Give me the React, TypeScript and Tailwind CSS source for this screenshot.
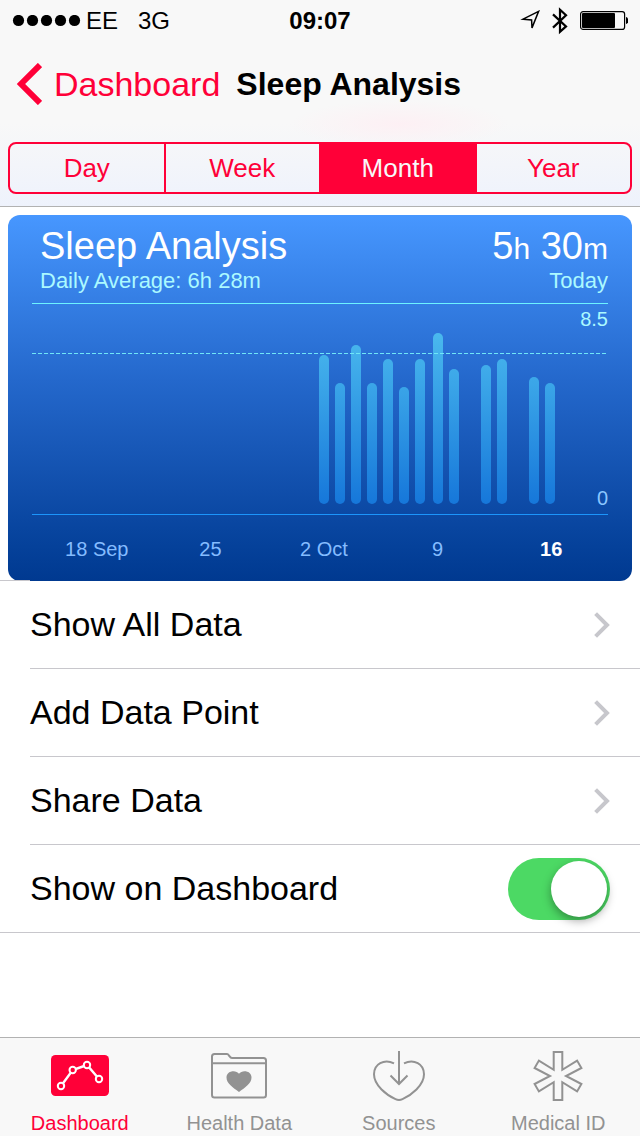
import { useState } from 'react'
import type { ReactNode } from 'react'

const ranges = ['Day', 'Week', 'Month', 'Year']

const weeks = ['18 Sep', '25', '2 Oct', '9', '16']

// x centre and top of every night's bar, in chart units
const nights = [
  { x: 292, top: 52 },
  { x: 308, top: 80 },
  { x: 324, top: 42 },
  { x: 340, top: 80 },
  { x: 356, top: 56 },
  { x: 372, top: 84 },
  { x: 388, top: 56 },
  { x: 406, top: 30 },
  { x: 422, top: 66 },
  { x: 454, top: 62 },
  { x: 470, top: 56 },
  { x: 502, top: 74 },
  { x: 518, top: 80 },
]

function StatusBar() {
  return (
    <div className="grid h-[42px] grid-cols-3 items-center px-3 text-2xl leading-10">
      <div className="flex items-center">
        <svg width="70" height="12" viewBox="0 0 70 12" aria-hidden="true">
          {[6.5, 20.5, 34.5, 48.5, 62.5].map((cx) => (
            <circle key={cx} cx={cx} cy="5.5" r="5.6" />
          ))}
        </svg>
        <span className="ml-1">EE</span>
        <span className="ml-5">3G</span>
      </div>
      <div className="text-center font-bold">09:07</div>
      <div className="flex items-center justify-end">
        <svg width="20" height="22" viewBox="0 0 20 22" fill="none" stroke="#000" strokeWidth="1.5" aria-hidden="true">
          <path d="M18.6 1.400 3 9.200l8.600.7.4 8z" />
        </svg>
        <svg className="ml-3" width="16" height="28" viewBox="0 0 16 28" fill="none" stroke="#000" strokeWidth="2.2" aria-hidden="true">
          <path d="m1 7.400 13 12-6 5.400V2.800l6 5.400-13 12.400" />
        </svg>
        <svg className="ml-3" width="48" height="20" viewBox="0 0 48 20" aria-hidden="true">
          <rect x="0.6" y="0.6" width="44" height="17.800" rx="2.5" fill="none" stroke="#000" strokeWidth="1.2" />
          <rect x="2" y="2" width="33" height="15" rx="1" />
          <path d="M46 6c1.500.4 2.500 1.800 2.500 3.500S47.500 12.600 46 13z" />
        </svg>
      </div>
    </div>
  )
}

function SleepChart() {
  return (
    <svg viewBox="0 0 576 213" className="block h-auto w-full" role="img" aria-label="Hours of sleep per night">
      <defs>
        <linearGradient id="bar" gradientUnits="userSpaceOnUse" x1="0" y1="30" x2="0" y2="201">
          <stop offset="0" stopColor="#4ab9ee" />
          <stop offset="1" stopColor="#1677da" />
        </linearGradient>
      </defs>
      <rect width="576" height="1" fill="#6df3ff" />
      {nights.map((n) => (
        <rect key={n.x} x={n.x - 5} y={n.top} width="10" height={201 - n.top} rx="5" fill="url(#bar)" />
      ))}
      <line x1="0" y1="50.5" x2="574" y2="50.5" stroke="#6fe6f7" strokeDasharray="4 2" />
      <text x="576" y="23" textAnchor="end" fontSize="20" fill="#abf9ff">8.5</text>
      <text x="576" y="202" textAnchor="end" fontSize="20" fill="#8ac6ff">0</text>
      <rect y="211" width="576" height="1" fill="#1c95fb" />
    </svg>
  )
}

function Row({ children }: { children: ReactNode }) {
  return (
    <a href="#" className="ml-[30px] flex h-[88px] items-center justify-between border-b border-[#c8c7cc] pr-[30px]">
      {children}
      <svg width="16" height="26" viewBox="0 0 16 26" fill="none" stroke="#c7c7cc" strokeWidth="4" aria-hidden="true">
        <path d="m1.6 1.6 11.4 11.4L1.6 24.4" />
      </svg>
    </a>
  )
}

function DashboardIcon() {
  return (
    <svg width="58" height="52" viewBox="0 0 58 52" fill="none" aria-hidden="true">
      <rect y="5" width="58" height="41" rx="4.5" fill="#ff0038" />
      <path d="M10 36 21.7 20 36 15l12 14" stroke="#fff" strokeWidth="2.4" />
      {[[10, 36], [21.7, 20], [36, 15], [48, 29]].map(([cx, cy]) => (
        <circle key={cx} cx={cx} cy={cy} r="3.2" fill="#ff0038" stroke="#fff" strokeWidth="2" />
      ))}
    </svg>
  )
}

function FolderIcon() {
  return (
    <svg width="56" height="52" viewBox="0 0 56 52" fill="none" stroke="#929292" strokeWidth="2" aria-hidden="true">
      <path d="M1 45V6.5C1 5 2 4 3.5 4H16c2 0 2.5 4 5 4h31.5C54 8 55 9 55 10.5V45c0 1.500-1 2.500-2.500 2.500h-49C2 47.500 1 46.500 1 45zM1 13.300h54" />
      <path d="M28 42c-6-4.500-12.500-8.500-12.500-14.500 0-7 9.500-8 12.500-3.800 3-4.200 12.500-3.200 12.500 3.800 0 6-6.500 10-12.500 14.500z" fill="#929292" stroke="none" />
    </svg>
  )
}

function SourcesIcon() {
  return (
    <svg width="54" height="52" viewBox="0 0 54 52" fill="none" stroke="#929292" strokeWidth="2" aria-hidden="true">
      <path d="M27 1v33M18.500 25.500 27 34l8.500-8.500" />
      <path d="M22 13.300C12 8.500 2 14 2 24.300 2 35.500 15 45.500 23.500 49.200c2.500 1.100 4.500 1.100 7 0C39 45.500 52 35.500 52 24.300 52 14 42 8.500 32 13.300" />
    </svg>
  )
}

function MedicalIcon() {
  return (
    <svg width="50" height="52" viewBox="0 0 50 52" fill="none" stroke="#929292" strokeWidth="2" aria-hidden="true">
      <path d="M20.700 2h8.600v17.800l14.800-9.200 4.300 7.400L33 26l15.400 8-4.300 7.400-14.800-9.200V50h-8.600V32.200L5.900 41.400 1.600 34 17 26 1.600 18l4.300-7.400 14.800 9.200z" />
    </svg>
  )
}

const tabs = [
  { label: 'Dashboard', icon: <DashboardIcon /> },
  { label: 'Health Data', icon: <FolderIcon /> },
  { label: 'Sources', icon: <SourcesIcon /> },
  { label: 'Medical ID', icon: <MedicalIcon /> },
]

export default function App() {
  const [range, setRange] = useState('Month')
  const [pinned, setPinned] = useState(true)

  return (
    <div className="flex min-h-screen flex-col bg-white font-['Liberation_Sans',Arial,sans-serif] text-black">
      {/* Header */}
      <header className="border-b border-[#b2b2b2] bg-[radial-gradient(ellipse_110px_24px_at_400px_124px,#fdf0f4,transparent),linear-gradient(#f8f8f8_60%,#eef2fc)]">
        <StatusBar />
        <div className="flex h-[84px] items-center gap-4 pl-4">
          <a href="#" className="flex items-center gap-3 text-[34px] text-[#ff0038]">
            <svg width="26" height="42" viewBox="0 0 26 42" fill="none" stroke="#ff0038" strokeWidth="6" aria-hidden="true">
              <path d="M24 2 5 21l19 19" />
            </svg>
            Dashboard
          </a>
          <h1 className="text-[32px] font-bold">Sleep Analysis</h1>
        </div>
        <div className="px-2 pt-4 pb-3">
          <div className="flex h-[52px] overflow-hidden rounded-lg border-2 border-[#ff0038]">
            {ranges.map((r) => (
              <button
                key={r}
                type="button"
                aria-pressed={r === range}
                onClick={() => setRange(r)}
                className={`flex-1 border-[#ff0038] text-[26px] not-last:border-r-2 ${
                  r === range ? 'bg-[#ff0038] text-[#f8f8f8]' : 'text-[#ff0038]'
                }`}
              >
                {r}
              </button>
            ))}
          </div>
        </div>
      </header>

      <main className="flex-1">
        {/* Chart card */}
        <section className="mx-2 mt-2 rounded-xl bg-linear-to-b from-[#4797ff] via-[#2468cc] via-45% to-[#003990] px-6">
          <div className="flex justify-between pt-2 pb-[10px] pl-2">
            <div>
              <h2 className="text-[38px] leading-[46px] text-white">Sleep Analysis</h2>
              <p className="text-[22px] leading-6 text-[#abf9ff]">Daily Average: 6h 28m</p>
            </div>
            <div className="text-right">
              <p className="text-[38px] leading-[46px] text-white">
                5<span className="text-[30px] leading-none">h</span> 30<span className="text-[30px] leading-none">m</span>
              </p>
              <p className="text-[22px] leading-6 text-[#abf9ff]">Today</p>
            </div>
          </div>
          <SleepChart />
          <div className="grid h-[65px] grid-cols-5 items-center pl-2 text-center text-xl text-[#84bcff]">
            {weeks.map((w) => (
              <span key={w} className="last:font-bold last:text-white">{w}</span>
            ))}
          </div>
        </section>

        {/* Options */}
        <div className="-mt-px h-px w-[30px] bg-[#c8c7cc]" />
        <nav className="text-[34px]">
          <Row>Show All Data</Row>
          <Row>Add Data Point</Row>
          <Row>Share Data</Row>
        </nav>
        <div className="flex h-[88px] items-center justify-between border-b border-[#c8c7cc] px-[30px] text-[34px]">
          <label htmlFor="pinned">Show on Dashboard</label>
          <input
            id="pinned"
            type="checkbox"
            role="switch"
            checked={pinned}
            onChange={(e) => setPinned(e.target.checked)}
            className="flex h-[62px] w-[102px] appearance-none items-center rounded-full bg-[#e5e5ea] px-[3px] before:size-14 before:rounded-full before:bg-white before:shadow-[0_4px_10px_rgba(0,0,0,0.35)] checked:justify-end checked:bg-[#4cd964]"
          />
        </div>
      </main>

      {/* Tab bar */}
      <nav className="grid grid-cols-4 border-t border-[#b2b2b2] bg-[#f8f8f8] pt-3 pr-[2px]">
        {tabs.map((tab, i) => (
          <a
            key={tab.label}
            href="#"
            className={`flex flex-col items-center gap-2 text-xl leading-[26px] ${i === 0 ? 'text-[#ff0038]' : 'text-[#929292]'}`}
          >
            {tab.icon}
            {tab.label}
          </a>
        ))}
      </nav>
    </div>
  )
}
